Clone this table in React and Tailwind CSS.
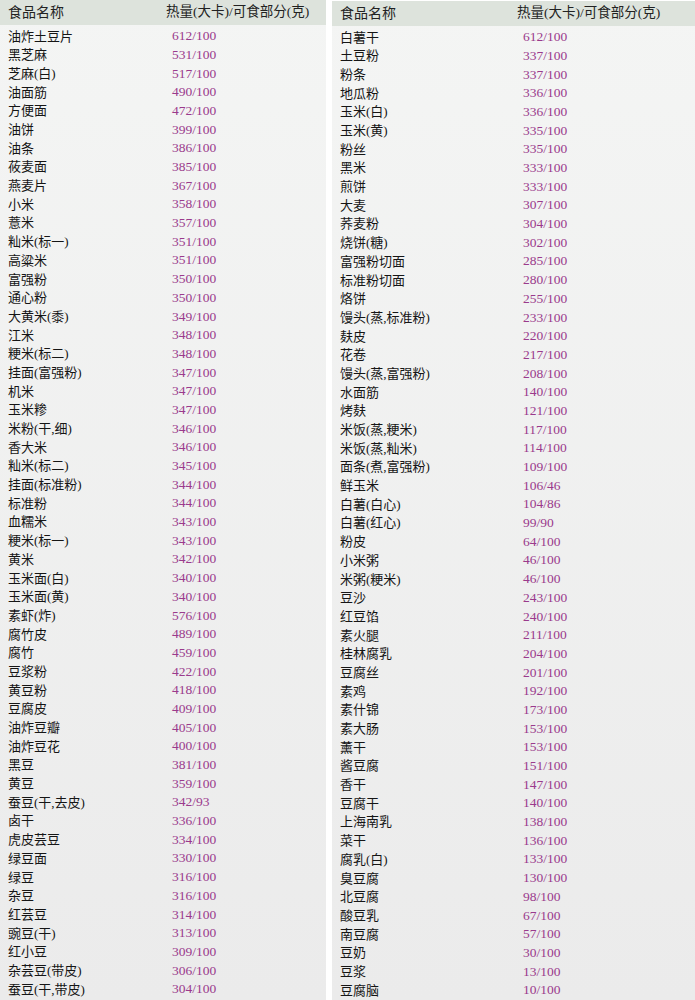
import React from 'react'

const left = [
  ['油炸土豆片', '612/100'], ['黑芝麻', '531/100'], ['芝麻(白)', '517/100'], ['油面筋', '490/100'],
  ['方便面', '472/100'], ['油饼', '399/100'], ['油条', '386/100'], ['莜麦面', '385/100'],
  ['燕麦片', '367/100'], ['小米', '358/100'], ['薏米', '357/100'], ['籼米(标一)', '351/100'],
  ['高粱米', '351/100'], ['富强粉', '350/100'], ['通心粉', '350/100'], ['大黄米(黍)', '349/100'],
  ['江米', '348/100'], ['粳米(标二)', '348/100'], ['挂面(富强粉)', '347/100'], ['机米', '347/100'],
  ['玉米糁', '347/100'], ['米粉(干,细)', '346/100'], ['香大米', '346/100'], ['籼米(标二)', '345/100'],
  ['挂面(标准粉)', '344/100'], ['标准粉', '344/100'], ['血糯米', '343/100'], ['粳米(标一)', '343/100'],
  ['黄米', '342/100'], ['玉米面(白)', '340/100'], ['玉米面(黄)', '340/100'], ['素虾(炸)', '576/100'],
  ['腐竹皮', '489/100'], ['腐竹', '459/100'], ['豆浆粉', '422/100'], ['黄豆粉', '418/100'],
  ['豆腐皮', '409/100'], ['油炸豆瓣', '405/100'], ['油炸豆花', '400/100'], ['黑豆', '381/100'],
  ['黄豆', '359/100'], ['蚕豆(干,去皮)', '342/93'], ['卤干', '336/100'], ['虎皮芸豆', '334/100'],
  ['绿豆面', '330/100'], ['绿豆', '316/100'], ['杂豆', '316/100'], ['红芸豆', '314/100'],
  ['豌豆(干)', '313/100'], ['红小豆', '309/100'], ['杂芸豆(带皮)', '306/100'], ['蚕豆(干,带皮)', '304/100'],
]

const right = [
  ['白薯干', '612/100'], ['土豆粉', '337/100'], ['粉条', '337/100'], ['地瓜粉', '336/100'],
  ['玉米(白)', '336/100'], ['玉米(黄)', '335/100'], ['粉丝', '335/100'], ['黑米', '333/100'],
  ['煎饼', '333/100'], ['大麦', '307/100'], ['荞麦粉', '304/100'], ['烧饼(糖)', '302/100'],
  ['富强粉切面', '285/100'], ['标准粉切面', '280/100'], ['烙饼', '255/100'], ['馒头(蒸,标准粉)', '233/100'],
  ['麸皮', '220/100'], ['花卷', '217/100'], ['馒头(蒸,富强粉)', '208/100'], ['水面筋', '140/100'],
  ['烤麸', '121/100'], ['米饭(蒸,粳米)', '117/100'], ['米饭(蒸,籼米)', '114/100'], ['面条(煮,富强粉)', '109/100'],
  ['鲜玉米', '106/46'], ['白薯(白心)', '104/86'], ['白薯(红心)', '99/90'], ['粉皮', '64/100'],
  ['小米粥', '46/100'], ['米粥(粳米)', '46/100'], ['豆沙', '243/100'], ['红豆馅', '240/100'],
  ['素火腿', '211/100'], ['桂林腐乳', '204/100'], ['豆腐丝', '201/100'], ['素鸡', '192/100'],
  ['素什锦', '173/100'], ['素大肠', '153/100'], ['薰干', '153/100'], ['酱豆腐', '151/100'],
  ['香干', '147/100'], ['豆腐干', '140/100'], ['上海南乳', '138/100'], ['菜干', '136/100'],
  ['腐乳(白)', '133/100'], ['臭豆腐', '130/100'], ['北豆腐', '98/100'], ['酸豆乳', '67/100'],
  ['南豆腐', '57/100'], ['豆奶', '30/100'], ['豆浆', '13/100'], ['豆腐脑', '10/100'],
]

const Table = ({ rows, nameW, className }) => (
  <div className={`flex flex-col bg-gradient-to-b from-[#f4f5f4] to-[#ebebeb] ${className}`}>
    <div className='flex items-center h-[25px] bg-[#dde3dc] text-[#222]'>
      <div className='pl-2 text-[14px] shrink-0' style={{ width: nameW }}>食品名称</div>
      <div className='text-[13.5px] -ml-[6px]'>热量(大卡)/可食部分(克)</div>
    </div>
    <div className='pt-[2px]'>
      {rows.map(([name, value], index) => (
        <div key={index} className='flex items-center h-[18.69px]'>
          <div className='pl-2 text-[13px] text-[#151515] shrink-0' style={{ width: nameW }}>{name}</div>
          <div className='text-[13.5px] text-[#9a3a8c]'>{value}</div>
        </div>
      ))}
    </div>
  </div>
)

export default function App() {
  return (
    <div
      className='flex w-[695px] h-[1000px] bg-white overflow-hidden gap-[6px]'
      style={{ fontFamily: '"Liberation Serif", "Noto Sans CJK SC", serif' }}
    >
      <Table rows={left} nameW={172} className='w-[326px]' />
      <Table rows={right} nameW={191} className='flex-1 mt-[1px]' />
    </div>
  )
}
